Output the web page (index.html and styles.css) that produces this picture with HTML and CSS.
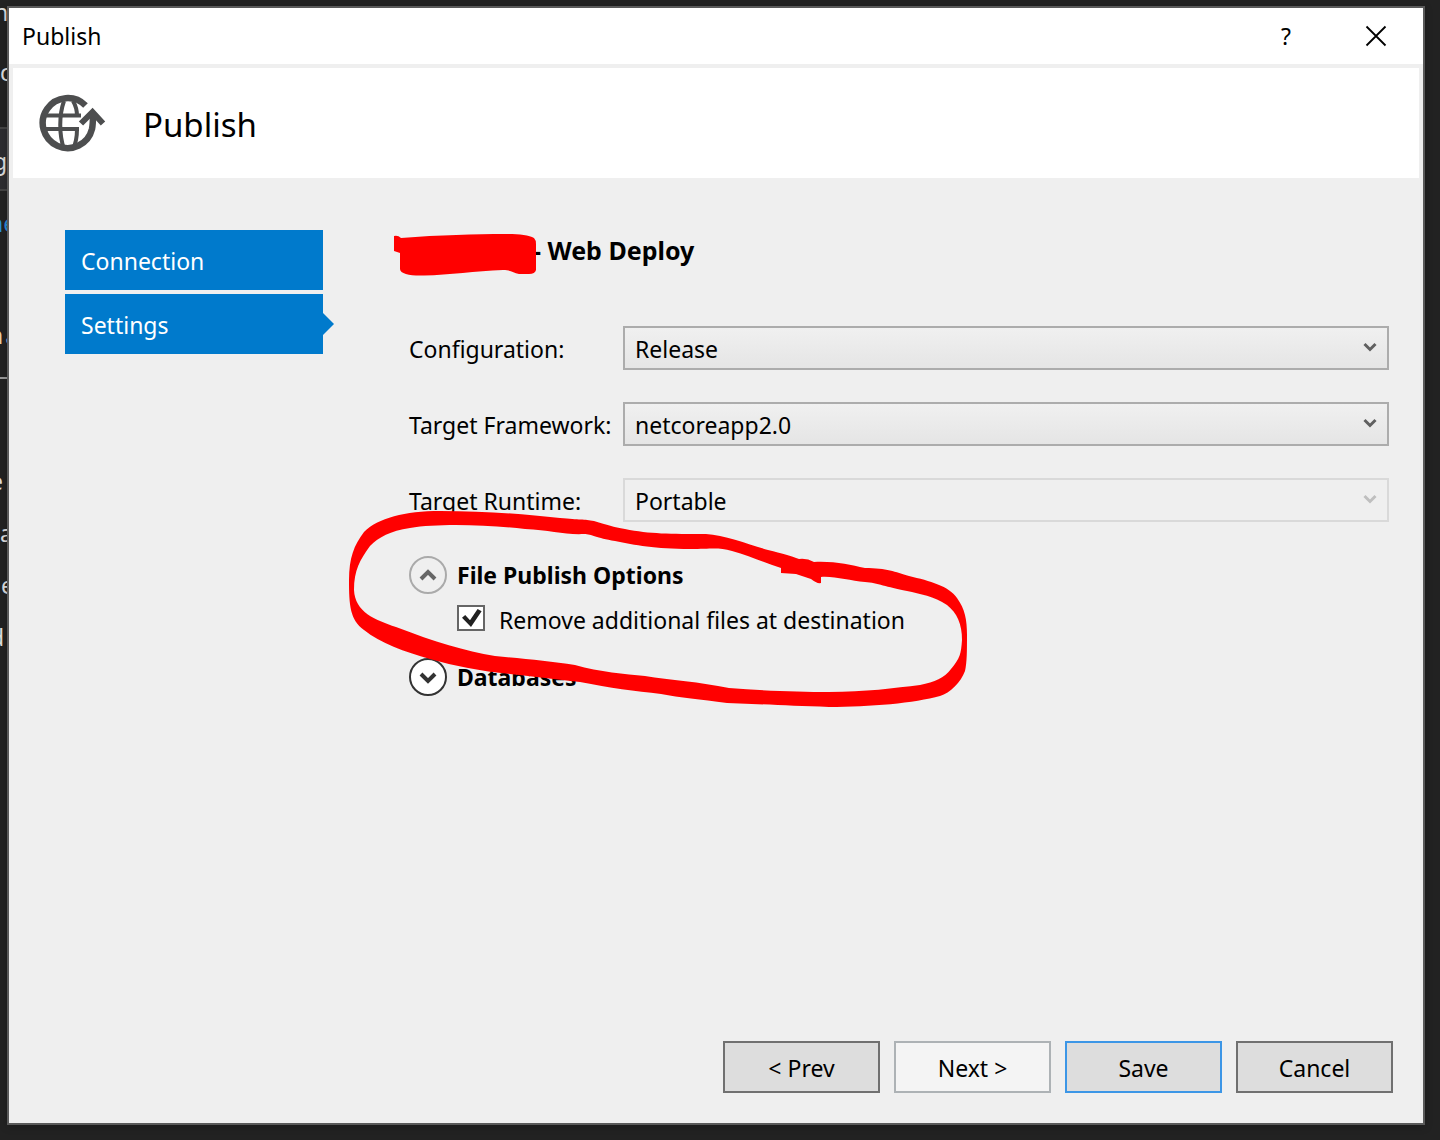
FILE: index.html
```html
<!DOCTYPE html>
<html lang="en">
<head>
<meta charset="utf-8">
<meta name="viewport" content="width=device-width, initial-scale=1">
<title>Publish</title>
<link rel="stylesheet" href="styles.css">
</head>
<body>
<div class="backdrop" aria-hidden="true">
  <div class="line line-top">n</div>
  <div class="line line-word">c</div>
  <div class="line line-band">g</div>
  <div class="line line-link">ne</div>
  <div class="line line-tan">n<span>a</span></div>
  <div class="line line-first">e</div>
  <div class="line line-second">a</div>
  <div class="line line-third">e</div>
  <div class="line line-last">d</div>
</div>
<div class="dialog" role="dialog" aria-labelledby="caption">
  <div class="titlebar">
    <span class="caption" id="caption">Publish</span>
    <button class="caption-button" type="button" aria-label="Help">?</button>
    <button class="caption-button" type="button" aria-label="Close">
      <svg width="22" height="22" viewBox="0 0 22 22"><path d="M1.500 1.500L20.500 20.500M20.500 1.500L1.500 20.500" fill="none" stroke="#000" stroke-width="1.800"/></svg>
    </button>
  </div>
  <header class="banner">
    <svg class="globe" width="68" height="60" viewBox="0 0 68 60" fill="none" stroke="#4d4e4f">
      <path d="M46.500 12.500A25 25 0 1 0 53 36C54 31 54 27 54 22" stroke-width="6.500"/>
      <path d="M7 22.500H42M7 36H40" stroke-width="4"/>
      <path d="M25 8C20 22 20 42 25 56M34 8C37 13 38 17 38 23M38 36C38 43 37 50 34 56" stroke-width="4"/>
      <path d="M42 30.500L53.500 19L64 30.500" stroke-width="6"/>
    </svg>
    <h1>Publish</h1>
  </header>
  <div class="content">
    <nav class="steps" aria-label="Steps">
      <a href="#connection">Connection</a>
      <a class="current" href="#settings" aria-current="step">Settings</a>
    </nav>
    <main class="settings" id="settings">
      <h2>- Web Deploy</h2>
      <div class="field">
        <label for="configuration">Configuration:</label>
        <div class="combo">
          <select id="configuration"><option>Release</option></select>
          <svg class="arrow" width="14" height="10" viewBox="0 0 14 10"><path d="M1.500 2L7 7.500L12.500 2"/></svg>
        </div>
      </div>
      <div class="field">
        <label for="framework">Target Framework:</label>
        <div class="combo">
          <select id="framework"><option>netcoreapp2.0</option></select>
          <svg class="arrow" width="14" height="10" viewBox="0 0 14 10"><path d="M1.500 2L7 7.500L12.500 2"/></svg>
        </div>
      </div>
      <div class="field">
        <label for="runtime">Target Runtime:</label>
        <div class="combo">
          <select id="runtime" disabled><option>Portable</option></select>
          <svg class="arrow" width="14" height="10" viewBox="0 0 14 10"><path d="M1.500 2L7 7.500L12.500 2"/></svg>
        </div>
      </div>
      <section class="group">
        <button class="expander open" type="button" aria-expanded="true">
          <svg width="38" height="38" viewBox="0 0 38 38"><circle cx="19" cy="19" r="18"/><path d="M12 23L19 16L26 23"/></svg>
          File Publish Options
        </button>
        <label class="check"><input type="checkbox" checked><span>Remove additional files at destination</span></label>
      </section>
      <section class="group">
        <button class="expander" type="button" aria-expanded="false">
          <svg width="38" height="38" viewBox="0 0 38 38"><circle cx="19" cy="19" r="18"/><path d="M12 16L19 23L26 16"/></svg>
          Databases
        </button>
      </section>
      <svg class="markup" width="640" height="490" viewBox="345 230 640 490" fill="#f00" aria-hidden="true">
        <path d="M394 236Q398 235 401 238C440 235 475 234 505 234C518 234 529 235 534 238Q536 240 536 244V270Q535 274 529 274H519C513 273 511 270 503 270C475 271 450 275 424 275.500C411 276 400 274 400 269V253L394 251Z"/>
        <path fill-rule="evenodd" d="M349 580C349 558 354 545 364 532C378 518 405 511 440 511C485 511 525 514 560 518C580 520 584 519 594 521C608 525 613 527 625 529C650 534 670 534 706 534C725 535 750 545 768 550C783 554 789 555 799 559Q807 558 814 562C835 561 850 565 865 568C887 568 895 572 909 576C930 581 949 586 957 598C965 609 967 620 967 635C967 650 967 663 965 671C961 682 950 693 940 696C915 703 870 707 829 707C790 706 760 704 727 703C700 699 680 698 661 694C635 691 610 688 580 682C555 679 535 677 510 674C480 671 455 666 430 659C405 652 380 643 364 630C350 620 349 605 349 580ZM354 590C355 612 375 620 396 627C435 642 465 651 495 656C525 659 550 661 575 665C600 672 625 674 645 676C670 680 700 682 729 688C765 691 800 692 829 692C865 692 895 688 920 685C935 682 944 678 951 669C960 658 961 654 962 640C962 624 957 613 947 605C934 596 920 594 907 591C886 587 878 583 865 582C850 581 835 576 821 577V583Q817 584 811 579L796 574L781 573V568C765 563 750 556 732 551C718 547 712 549 690 549C655 549 635 545 615 541C596 538 592 534 584 534C565 535 550 530 525 529C490 525 440 523 410 528C390 531 379 537 370 546C360 560 354 570 354 590Z"/>
      </svg>
    </main>
  </div>
  <footer class="actions">
    <button type="button">&lt; Prev</button>
    <button type="button" class="muted">Next &gt;</button>
    <button type="button" class="primary">Save</button>
    <button type="button">Cancel</button>
  </footer>
</div>
</body>
</html>
```
FILE: styles.css
```css
*{box-sizing:border-box}
body{
  margin:0;
  min-height:100vh;
  padding:6px 15px 15px 7px;
  display:flex;
  position:relative;
  background:#222;
  color:#000;
  font:23px/32px "Noto Sans","Open Sans",sans-serif;
}
button,select,input{font:inherit;color:inherit;margin:0}
h1,h2{margin:0}

/* The editor window that shows at the left of the dialog */
.backdrop{position:absolute;left:0;top:0;width:7px;height:100%;overflow:hidden;color:#dcdcdc;white-space:nowrap}
.line{height:28px;line-height:24px}
.line-top{text-indent:-6px}
.line-word{margin-top:32px}
.line-band{margin-top:39px;height:64px;line-height:64px;background:#2d2d30;border:solid #444;border-width:2px 0;text-indent:-7px}
.line-link{margin-top:20px;color:#2a8fdc;text-indent:-11px}
.line-tan{margin-top:84px;height:56px;border-bottom:2px solid #999;color:#e8cfa0;text-indent:-11px}
.line-tan span{color:#aab4dc;margin-left:2px}
.line-first{margin-top:90px;text-indent:-10px}
.line-second{margin-top:24px;text-indent:0}
.line-third{margin-top:24px;text-indent:1px}
.line-last{margin-top:24px;text-indent:-10px}

.dialog{
  flex:1;
  min-width:0;
  position:relative;
  display:flex;
  flex-direction:column;
  border:2px solid #5a5a5a;
  background:#efefef;
  box-shadow:0 2px 8px #0003;
}
.titlebar{height:56px;display:flex;align-items:center;background:#fff;padding:0 2px 0 13px}
.caption{flex:1}
.caption-button{width:90px;height:56px;padding:0;border:0;background:none;display:flex;align-items:center;justify-content:center}
.banner{margin:4px 4px 0;height:110px;padding-left:26px;display:flex;align-items:center;gap:36px;background:#fff}
.banner h1{font-size:33px;line-height:48px;font-weight:400;padding-top:4px}
.content{flex:1;display:flex;padding:52px 34px 32px 56px}
.steps{flex:none;width:258px;display:flex;flex-direction:column;gap:4px}
.steps a{height:60px;padding:0 16px;line-height:62px;background:#007acc;color:#fff;text-decoration:none;position:relative}
.steps .current::after{content:"";position:absolute;left:100%;top:19px;border:11px solid transparent;border-left-color:#007acc;border-right:0}
.settings{flex:1;min-width:0;margin-left:86px;position:relative}
.settings h2{font-size:25px;line-height:40px;padding-left:124px;margin-bottom:56px}
.field{display:flex;margin-bottom:32px}
.field label{flex:none;width:214px;height:44px;line-height:46px}
.combo{flex:1;position:relative}
.combo select{
  display:block;
  width:100%;
  height:44px;
  padding:2px 10px 0;
  appearance:none;
  border:2px solid #acacac;
  border-radius:0;
  background:linear-gradient(#f0f0f0,#e5e5e5);
}
.combo select:disabled{background:#efefef;border-color:#d9d9d9;opacity:1}
.arrow{position:absolute;right:12px;top:16px;fill:none;stroke:#606060;stroke-width:3;pointer-events:none}
select:disabled + .arrow{stroke:#bfbfbf}
.group{margin-top:34px;display:flex;flex-direction:column;align-items:flex-start}
.group + .group{margin-top:24px}
.expander{display:flex;align-items:center;gap:10px;padding:0;border:0;background:none;font-weight:700;line-height:38px}
.expander svg{fill:#fff;stroke:#333;stroke-width:2}
.expander path{fill:none;stroke-width:4}
.expander.open svg{fill:none;stroke:#aaa}
.expander.open path{stroke:#666}
.check{display:flex;align-items:center;gap:14px;margin:8px 0 0 48px;height:32px}
.check span{padding-top:4px}
.check input{appearance:none;width:28px;height:26px;border:2px solid #666;background:#fff;position:relative}
.check input:checked::after{content:"";position:absolute;left:3px;top:2px;width:20px;height:18px;background:#212121;clip-path:polygon(0 48%,16% 34%,40% 62%,78% 0,98% 12%,45% 100%)}
.markup{position:absolute;left:-64px;top:0;pointer-events:none}
.actions{display:flex;justify-content:flex-end;gap:14px;padding:0 30px 30px}
.actions button{width:157px;height:52px;padding:2px 0 0;border:2px solid #707070;background:#ddd}
.actions .muted{background:#f4f4f4;border-color:#adb2b5}
.actions .primary{border-color:#3c96e6}
```
